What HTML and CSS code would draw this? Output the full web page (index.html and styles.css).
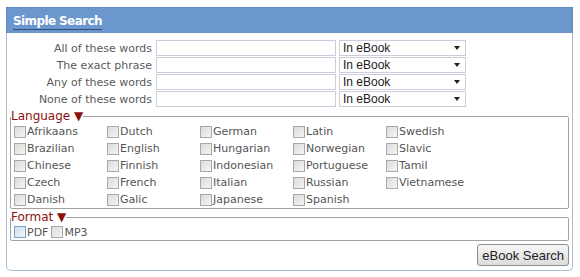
FILE: index.html
```html
<!DOCTYPE html>
<html lang="en">
<head>
  <meta charset="UTF-8" />
  <title>Simple Search</title>
  <link rel="stylesheet" href="styles.css">
</head>
<body>
  <div class="panel">
    <div class="panel-head"><span class="panel-title">Simple Search</span></div>
    <form class="panel-body" onsubmit="return false">
      <div class="terms">
        <label for="all">All of these words</label>
        <input type="text" id="all">
        <span class="select-wrap"><select><option>In eBook</option></select></span>

        <label for="exact">The exact phrase</label>
        <input type="text" id="exact">
        <span class="select-wrap"><select><option>In eBook</option></select></span>

        <label for="any">Any of these words</label>
        <input type="text" id="any">
        <span class="select-wrap"><select><option>In eBook</option></select></span>

        <label for="none">None of these words</label>
        <input type="text" id="none">
        <span class="select-wrap"><select><option>In eBook</option></select></span>
      </div>

      <fieldset class="group">
        <legend>Language &#9660;</legend>
        <div class="lang-grid">
          <label><input type="checkbox">Afrikaans</label>
          <label><input type="checkbox">Dutch</label>
          <label><input type="checkbox">German</label>
          <label><input type="checkbox">Latin</label>
          <label><input type="checkbox">Swedish</label>
          <label><input type="checkbox">Brazilian</label>
          <label><input type="checkbox">English</label>
          <label><input type="checkbox">Hungarian</label>
          <label><input type="checkbox">Norwegian</label>
          <label><input type="checkbox">Slavic</label>
          <label><input type="checkbox">Chinese</label>
          <label><input type="checkbox">Finnish</label>
          <label><input type="checkbox">Indonesian</label>
          <label><input type="checkbox">Portuguese</label>
          <label><input type="checkbox">Tamil</label>
          <label><input type="checkbox">Czech</label>
          <label><input type="checkbox">French</label>
          <label><input type="checkbox">Italian</label>
          <label><input type="checkbox">Russian</label>
          <label><input type="checkbox">Vietnamese</label>
          <label><input type="checkbox">Danish</label>
          <label><input type="checkbox">Galic</label>
          <label><input type="checkbox">Japanese</label>
          <label><input type="checkbox">Spanish</label>
        </div>
      </fieldset>

      <fieldset class="group">
        <legend>Format &#9660;</legend>
        <div class="format-row">
          <label><input type="checkbox" class="hot">PDF</label>
          <label><input type="checkbox">MP3</label>
        </div>
      </fieldset>

      <div class="actions">
        <button type="submit">eBook Search</button>
      </div>
    </form>
  </div>
</body>
</html>
```

FILE: styles.css
```css
body {
  margin: 0;
  padding: 7px 5px 0 6px;
  background: #fff;
  font-family: "DejaVu Sans", Verdana, sans-serif;
  font-size: 11px;
  color: #555;
}
.panel {
  width: 567px;
}
.panel-head {
  height: 26px;
  background: #6b97cd;
  border: 1px solid #5f8bc2;
  border-bottom: none;
  padding-left: 6px;
  box-sizing: border-box;
}
.panel-title {
  display: inline-block;
  margin-top: 5px;
  color: #fff;
  font-weight: bold;
  font-size: 12px;
  letter-spacing: -0.6px;
  line-height: 16px;
  border-bottom: 1px solid #2d4d7d;
}
.panel-body {
  border: 1px solid #a9bcd4;
  border-top: none;
  border-radius: 0 0 5px 5px;
  padding: 7px 3px 4px 3px;
}
.terms {
  display: grid;
  grid-template-columns: 142px 180px 127px;
  column-gap: 4px;
  row-gap: 1px;
  align-items: center;
}
.terms label {
  text-align: right;
  font-size: 11px;
  color: #5a5a5a;
}
.terms input {
  height: 16px;
  box-sizing: border-box;
  border: 1px solid #ccd;
  margin: 0;
  padding: 0 2px;
}
.select-wrap {
  position: relative;
  display: block;
  height: 16px;
}
.select-wrap select {
  appearance: none;
  width: 127px;
  height: 16px;
  box-sizing: border-box;
  border: 1px solid #ccd;
  border-radius: 0;
  background: #fff;
  padding: 0 3px;
  margin: 0 0 0 -1px;
  font-family: "Liberation Sans", Arial, sans-serif;
  font-size: 12px;
  color: #222;
}
.select-wrap::after {
  content: "";
  position: absolute;
  right: 7px;
  top: 6px;
  border-left: 3px solid transparent;
  border-right: 3px solid transparent;
  border-top: 4px solid #222;
}
.group {
  margin: 2px 0 0;
  padding: 0 0 0 3px;
  border: 1px solid #a3a3a3;
  border-radius: 2px;
  min-width: 0;
}
.group + .group {
  margin-top: 1px;
}
.group legend {
  padding: 0;
  margin-left: -3px;
  color: #8a1111;
  font-size: 12px;
  line-height: 14px;
}
.lang-grid {
  display: grid;
  grid-template-columns: repeat(5, 93px);
  grid-auto-rows: 17px;
  align-items: center;
}
.lang-grid label,
.format-row label {
  display: flex;
  align-items: center;
  color: #555;
  font-size: 11px;
}
.format-row {
  display: flex;
  gap: 3px;
  height: 16px;
  align-items: center;
}
input[type="checkbox"] {
  appearance: none;
  width: 12px;
  height: 12px;
  margin: 0 1px 0 0;
  border: 1px solid #a8a8a8;
  background: linear-gradient(135deg, #dcdcdc, #f4f4f4);
  box-sizing: border-box;
}
input[type="checkbox"].hot {
  border-color: #7aa0cc;
  background: linear-gradient(135deg, #cfe0f2, #f0f6fc);
}
.actions {
  display: flex;
  justify-content: flex-end;
  margin-top: 3px;
}
.actions button {
  height: 22px;
  padding: 0 4px;
  font-family: "Liberation Sans", Arial, sans-serif;
  font-size: 13px;
  color: #222;
  background: linear-gradient(#f6f6f6, #dcdcdc);
  border: 1px solid #8c8c8c;
  border-radius: 3px;
}
```
